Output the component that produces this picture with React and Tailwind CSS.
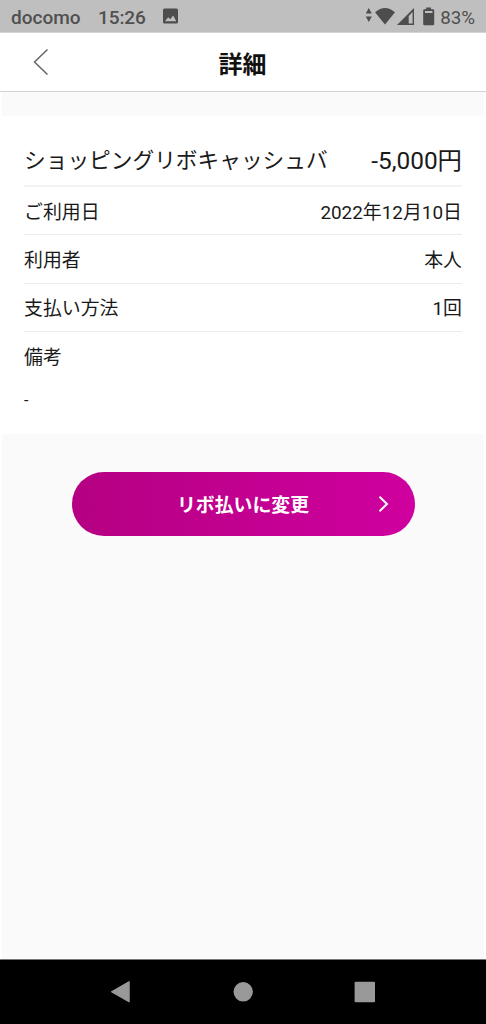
const rows = [
  { label: 'ご利用日', value: '2022年12月10日' },
  { label: '利用者', value: '本人' },
  { label: '支払い方法', value: '1回' },
];

function StatusBar() {
  return (
    <div className="flex h-[33px] shrink-0 items-center border-b border-[#d4d4d4] bg-[#bfbfbf] pr-[11px] pl-[11px] font-medium text-[#505050]">
      <span className="w-[87px] pt-[3px] text-[19px] leading-6">docomo</span>
      <span className="w-[65px] pt-[3px] text-[19px] leading-6 tracking-[-0.1px]">15:26</span>
      <svg className="h-4 w-4" viewBox="0 0 16 16" fill="none">
        <rect x="0" y="0.5" width="15" height="15" rx="1.5" fill="#4d4d4d" />
        <path d="M2 13.2L5.2 9.2L7.2 11.3L10.2 7.6L13.2 13.2Z" fill="#bfbfbf" />
      </svg>
      <svg className="ml-auto h-[22px] w-[75px]" viewBox="365 5 75 22" fill="#4d4d4d">
        <path d="M368.8 8L371.8 13.5H365.8ZM368.8 22L371.8 16.5H365.8Z" />
        <path d="M375 12.2Q385 3.6 395 12.2L385 24.5Z" />
        <path fillRule="evenodd" d="M414 8V25H397ZM412.6 12V23.5H408.7V16Z" />
        <path fillRule="evenodd" d="M426.2 7.5H431V9.3H433Q434.2 9.3 434.2 10.5V24Q434.2 25.2 433 25.2H424.4Q423.2 25.2 423.2 24V10.5Q423.2 9.3 424.4 9.3H426.2ZM425 11V13H432.4V11Z" />
      </svg>
      <span className="pt-[3px] text-[18.8px] leading-6 font-normal">83%</span>
    </div>
  );
}

function Header() {
  return (
    <header className="grid h-[59px] shrink-0 grid-cols-[1fr_auto_1fr] items-center border-b border-[#d2d2d2] bg-white">
      <svg className="ml-[32px] h-[28px] w-[18px]" viewBox="0 0 18 28" fill="none" stroke="#666" strokeWidth="1.5">
        <path d="M15.5 1.5L2.5 14L15.5 26.5" />
      </svg>
      <h1 className="-ml-px pt-[5px] text-[24px] leading-8 font-bold text-[#111]">詳細</h1>
    </header>
  );
}

export default function App() {
  return (
    <div className="flex h-[1024px] w-[486px] flex-col overflow-hidden bg-[#fafafa] font-['Roboto','Noto_Sans_CJK_JP',sans-serif] text-[#1a1a1a]">
      <StatusBar />
      <Header />
      <main className="grow border-x-2 border-white pt-6">
        <section className="h-[318px] bg-white px-[22px] text-[18.9px]">
          <div className="flex h-[71px] items-center justify-between border-b-2 border-[#f2f2f2] pt-[21px] whitespace-nowrap">
            <span className="text-[21.7px] leading-8">ショッピングリボキャッシュバ</span>
            <span className="text-[24.4px] leading-8">-5,000円</span>
          </div>
          {rows.map((row) => (
            <div key={row.label} className="flex h-[48.4px] items-center justify-between border-b border-[#ececec] pt-[4px]">
              <span>{row.label}</span>
              <span>{row.value}</span>
            </div>
          ))}
          <div className="flex h-[48.4px] items-center pt-[4px]">備考</div>
          <div className="flex h-[38px] items-center pt-[2px] text-[16px]">-</div>
        </section>
        <button className="mx-auto mt-[38px] grid h-[64px] w-[343px] grid-cols-[1fr_auto_1fr] items-center rounded-full bg-linear-to-r from-[#b50082] to-[#cf009f] text-white">
          <span />
          <span className="pt-[4px] text-[18.9px] font-bold">リボ払いに変更</span>
          <svg className="mr-[25px] h-[18px] w-3 justify-self-end" viewBox="0 0 12 18" fill="none" stroke="white" strokeWidth="2">
            <path d="M1.5 1.8L9 9L1.5 16.2" />
          </svg>
        </button>
      </main>
      <nav className="h-[65px] shrink-0 border-t border-[#777] bg-black">
        <svg className="h-16 w-full" viewBox="0 0 486 64" fill="#999">
          <path d="M129.2 21.5V42L111.3 31.8Z" stroke="#999" strokeLinejoin="round" />
          <circle cx="243.2" cy="31.8" r="9.7" />
          <rect x="354.6" y="21.8" width="20.4" height="20.4" rx="1" />
        </svg>
      </nav>
    </div>
  );
}
